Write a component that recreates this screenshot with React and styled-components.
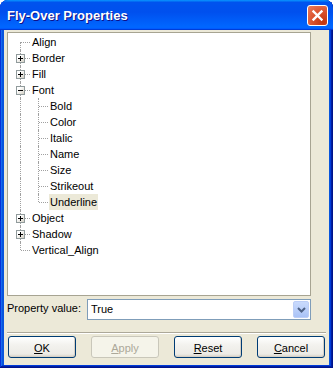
import React from "react";
import styled, { createGlobalStyle, css } from "styled-components";

const Global = createGlobalStyle`
  html, body { margin: 0; padding: 0; background: #ffffff; }
  body { font-family: "Liberation Sans", Arial, sans-serif; font-size: 11px; }
`;

const Window = styled.div`
  width: 333px;
  height: 368px;
  box-sizing: border-box;
  display: flex;
  flex-direction: column;
  background: #0855dd;
  border-radius: 8px 8px 0 0;
  overflow: hidden;
  box-shadow: inset -1px -1px #00138c, inset 1px 1px #0831d9,
    inset -2px -2px #001ea0, inset 2px 2px #166aee,
    inset -3px -3px #003bda, inset 3px 3px #0855dd;
`;

const TitleBar = styled.div`
  height: 30px;
  flex: none;
  box-sizing: border-box;
  display: flex;
  align-items: flex-start;
  justify-content: space-between;
  padding: 5px 5px 0 7px;
  background: linear-gradient(
    180deg,
    #0997ff,
    #0053ee 8%,
    #0050ee 40%,
    #0066ff 88%,
    #0066ff 93%,
    #005bff 95%,
    #003dd7 96%,
    #003dd7
  );
`;

const Title = styled.div`
  color: #ffffff;
  font-family: "Liberation Sans", Arial, sans-serif;
  font-weight: bold;
  font-size: 13px;
  line-height: 21px;
  text-shadow: 1px 1px #0f1089;
`;

const CloseButton = styled.div`
  width: 21px;
  height: 21px;
  box-sizing: border-box;
  border: 1px solid #ffffff;
  border-radius: 3px;
  background: radial-gradient(circle at 80% 85%, #c2350f 0%, #d9502b 45%, #ec7d5c 100%);
  display: flex;
  align-items: center;
  justify-content: center;
`;

const Client = styled.div`
  flex: 1;
  margin: 0 4px 3px 4px;
  background: #ece9d8;
  box-sizing: border-box;
  padding: 2px 3px 7px 3px;
  display: flex;
  flex-direction: column;
`;

const Tree = styled.div`
  width: 304px;
  height: 264px;
  box-sizing: border-box;
  border: 1px solid #a7a492;
  background: #ffffff;
  padding: 1px 0 0 4px;
  display: flex;
  flex-direction: column;
`;

const Row = styled.div`
  display: flex;
  align-items: center;
  height: 16px;
  flex: none;
`;

const Indent = styled.div`
  position: relative;
  width: 18px;
  height: 16px;
  flex: none;
  ${(p) =>
    (p.$up || p.$down) &&
    css`
      &::before {
        content: "";
        position: absolute;
        left: 8px;
        top: ${p.$up ? 0 : 8}px;
        bottom: ${p.$down ? 0 : 8}px;
        border-left: 1px dotted #a0a0a0;
      }
    `}
  ${(p) =>
    p.$branch &&
    css`
      &::after {
        content: "";
        position: absolute;
        left: 9px;
        width: 9px;
        top: 8px;
        border-top: 1px dotted #a0a0a0;
      }
    `}
`;

const Expander = styled.div`
  position: absolute;
  left: 4px;
  top: 4px;
  width: 9px;
  height: 9px;
  box-sizing: border-box;
  border: 1px solid #919b9c;
  background: linear-gradient(135deg, #ffffff 30%, #d4d0c4 100%);
  z-index: 1;
  display: flex;
  align-items: center;
  justify-content: center;
`;

const Label = styled.span`
  margin-left: 1px;
  padding: 0 1px;
  height: 16px;
  line-height: 16px;
  color: #000000;
  font-size: 11px;
  white-space: nowrap;
  background: ${(p) => (p.$selected ? "#ece9d8" : "transparent")};
`;

const PropertyRow = styled.div`
  margin-top: 3px;
  display: flex;
  align-items: flex-start;
`;

const PropLabel = styled.div`
  width: 80px;
  flex: none;
  padding-top: 2px;
  line-height: 14px;
  color: #000000;
`;

const Combo = styled.div`
  width: 224px;
  height: 21px;
  box-sizing: border-box;
  border: 1px solid #7f9db9;
  background: #ffffff;
  display: flex;
  align-items: stretch;
`;

const ComboText = styled.div`
  flex: 1;
  padding-left: 3px;
  line-height: 19px;
  color: #000000;
`;

const DropButton = styled.div`
  width: 16px;
  height: 17px;
  margin: 1px 1px 1px 0;
  box-sizing: border-box;
  border: 1px solid #bccef7;
  border-radius: 2px;
  background: linear-gradient(180deg, #c9dafd 0%, #b7cdf9 60%, #a9c2f6 100%);
  display: flex;
  align-items: center;
  justify-content: center;
`;

const Separator = styled.div`
  margin-top: 12px;
  width: 319px;
  height: 0;
  border-top: 1px solid #aca899;
  border-bottom: 1px solid #ffffff;
`;

const ButtonRow = styled.div`
  margin-top: 2px;
  padding-left: 1px;
  display: flex;
  gap: 15px;
`;

const Button = styled.div`
  width: 68px;
  height: 22px;
  box-sizing: border-box;
  border: 1px solid ${(p) => (p.$disabled ? "#c9c7ba" : "#003c74")};
  border-radius: 3px;
  background: ${(p) =>
    p.$disabled
      ? "#f5f4ea"
      : "linear-gradient(180deg, #ffffff 0%, #f3f2ee 40%, #ecebe6 85%, #d6d0c5 100%)"};
  color: ${(p) => (p.$disabled ? "#aca899" : "#000000")};
  display: flex;
  align-items: center;
  justify-content: center;
  font-size: 11px;
  line-height: 14px;
  padding-top: 1px;
  ${(p) =>
    !p.$disabled &&
    css`
      box-shadow: inset -1px -1px #d6d0c5;
    `}
`;

const Mnemonic = styled.span`
  text-decoration: underline;
`;

const items = [
  { label: "Align", level: 0 },
  { label: "Border", level: 0, exp: "plus" },
  { label: "Fill", level: 0, exp: "plus" },
  { label: "Font", level: 0, exp: "minus" },
  { label: "Bold", level: 1 },
  { label: "Color", level: 1 },
  { label: "Italic", level: 1 },
  { label: "Name", level: 1 },
  { label: "Size", level: 1 },
  { label: "Strikeout", level: 1 },
  { label: "Underline", level: 1, last: true, selected: true },
  { label: "Object", level: 0, exp: "plus" },
  { label: "Shadow", level: 0, exp: "plus" },
  { label: "Vertical_Align", level: 0, last: true },
];

function ExpanderBox({ type }) {
  return (
    <Expander>
      <svg width="7" height="7" viewBox="0 0 7 7">
        <rect x="1" y="3" width="5" height="1" fill="#000" />
        {type === "plus" && <rect x="3" y="1" width="1" height="5" fill="#000" />}
      </svg>
    </Expander>
  );
}

function TreeRow({ item, index }) {
  if (item.level === 0) {
    return (
      <Row>
        <Indent $up={index > 0} $down={!item.last} $branch>
          {item.exp && <ExpanderBox type={item.exp} />}
        </Indent>
        <Label $selected={item.selected}>{item.label}</Label>
      </Row>
    );
  }
  return (
    <Row>
      <Indent $up $down />
      <Indent $up $down={!item.last} $branch />
      <Label $selected={item.selected}>{item.label}</Label>
    </Row>
  );
}

export default function App() {
  return (
    <>
      <Global />
      <Window>
        <TitleBar>
          <Title>Fly-Over Properties</Title>
          <CloseButton>
            <svg width="13" height="13" viewBox="0 0 13 13">
              <path d="M2.5 2.5 L10.5 10.5 M10.5 2.5 L2.5 10.5" stroke="#ffffff" strokeWidth="2.4" strokeLinecap="square" fill="none" />
            </svg>
          </CloseButton>
        </TitleBar>
        <Client>
          <Tree>
            {items.map((it, i) => (
              <TreeRow key={it.label} item={it} index={i} />
            ))}
          </Tree>
          <PropertyRow>
            <PropLabel>Property value:</PropLabel>
            <Combo>
              <ComboText>True</ComboText>
              <DropButton>
                <svg width="9" height="6" viewBox="0 0 9 6">
                  <path d="M1 1 L4.5 4.5 L8 1" stroke="#4d6185" strokeWidth="2" fill="none" />
                </svg>
              </DropButton>
            </Combo>
          </PropertyRow>
          <Separator />
          <ButtonRow>
            <Button>
              <span><Mnemonic>O</Mnemonic>K</span>
            </Button>
            <Button $disabled>
              <span><Mnemonic>A</Mnemonic>pply</span>
            </Button>
            <Button>
              <span><Mnemonic>R</Mnemonic>eset</span>
            </Button>
            <Button>
              <span><Mnemonic>C</Mnemonic>ancel</span>
            </Button>
          </ButtonRow>
        </Client>
      </Window>
    </>
  );
}
